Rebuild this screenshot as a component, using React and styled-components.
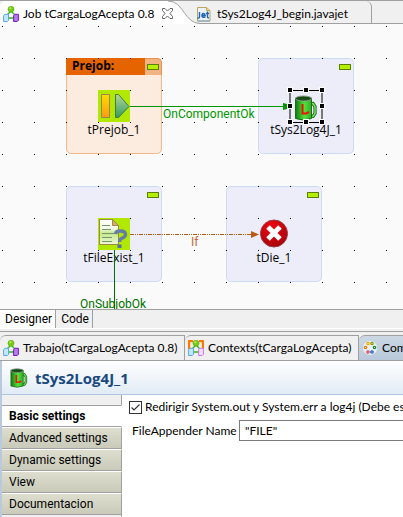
import React from "react";
import styled, { createGlobalStyle } from "styled-components";

const GlobalStyle = createGlobalStyle`
  * { box-sizing: border-box; }
  body {
    margin: 0;
    overflow: hidden;
    background: #f0f0f0;
    color: #000;
    font: 12px/16px Lato, "Open Sans", sans-serif;
  }
  button, input { font: inherit; color: inherit; }
  svg { flex: none; }
`;

const Workbench = styled.div`
  display: flex;
  flex-direction: column;
  height: 100vh;
  overflow: hidden;
  white-space: nowrap;
`;

const EditorTabs = styled.div`
  display: flex;
  flex: none;
  height: 24px;
  border-top: 1px solid #a0a0a0;
  background: #f0f0f0;
  box-shadow: inset 0 -1px #a0a0a0;
`;

const TabButton = styled.button`
  display: flex;
  align-items: center;
  gap: 4px;
  border: 0;
  padding: 0 0 0 3px;
  background: none;
  white-space: nowrap;
`;

const ActiveEditorTab = styled(TabButton)`
  flex: none;
  z-index: 1;
  width: 168px;
  padding-top: 2px;
  background: #fff;
  border-top-left-radius: 6px;
`;

const TabCurve = styled.svg`
  width: 32px;
  height: 23px;
`;

const EditorTab = styled(TabButton)`
  flex: none;
  width: 175px;
  padding: 2px 0 0;
  margin-left: -3px;
  gap: 6px;
  border-right: 1px solid #a0a0a0;
  border-top-right-radius: 6px;
`;

const CloseIcon = styled.svg`
  margin-left: auto;
  margin-right: -5px;
`;

const Canvas = styled.main`
  position: relative;
  flex: none;
  height: 285px;
  overflow: hidden;
  background: #fafafa;
  font-family: "Open Sans", sans-serif;
`;

const Layer = styled.svg`
  position: absolute;
  inset: 0;
  width: 100%;
  height: 100%;
  pointer-events: none;
`;

const Subjob = styled.section`
  position: absolute;
  left: ${(p) => p.$x}px;
  top: ${(p) => p.$y}px;
  width: 96px;
  height: 96px;
  border: 1px solid ${(p) => (p.$warm ? "#f5b888" : "#cfdaf3")};
  border-radius: 5px;
  background: ${(p) => (p.$warm ? "#fcecdf" : "#ededfa")};
`;

const SubjobBar = styled.header`
  display: flex;
  justify-content: flex-end;
  height: 17px;
  margin: -1px -1px 0;
`;

const SubjobTitle = styled.h2`
  flex: 1;
  margin: 0;
  padding-left: 6px;
  background: #e66400;
  font-size: 12px;
  line-height: 16px;
  font-weight: 700;
`;

const Collapse = styled.button`
  display: flex;
  justify-content: center;
  width: 17px;
  border: 1px solid ${(p) => (p.$warm ? "#e89050" : "transparent")};
  border-width: 1px 1px 0 0;
  border-top-right-radius: 5px;
  padding: 5px 0 0;
  background: ${(p) => (p.$warm ? "#f2b382" : "transparent")};

  &::before {
    content: "";
    width: 10px;
    height: 4px;
    border: 1px solid #5c8000;
    background: #b4f000;
  }
`;

const Node = styled.figure`
  position: absolute;
  left: ${(p) => p.$x}px;
  top: ${(p) => p.$y}px;
  display: flex;
  flex-direction: column;
  align-items: center;
  width: 96px;
  margin: 0;
`;

const LinkLabel = styled.span`
  position: absolute;
  left: ${(p) => p.$x}px;
  top: ${(p) => p.$y}px;
  color: ${(p) => p.$color};
  font-family: Roboto, sans-serif;
`;

const PageTabs = styled.div`
  display: flex;
  flex: none;
  height: 20px;
  border-top: 1px solid #a0a0a0;
  border-bottom: 1px solid #fff;
  font-family: Roboto, sans-serif;
`;

const PageTab = styled.button`
  border: 0;
  border-right: 1px solid #a0a0a0;
  padding: 0 3px 0 5px;
  background: ${(p) => (p.$active ? "#fff" : "#f0f0f0")};
`;

const ViewTabs = styled.div`
  display: flex;
  flex: none;
  height: 30px;
  margin-top: 2px;
  border-top: 1px solid #a0a0a0;
  border-bottom: 1px solid #a0a0a0;
  padding-top: 3px;
`;

const ViewTab = styled(TabButton)`
  flex: none;
  width: ${(p) => p.$width}px;
  border-top: 1px solid #a0a0a0;
  border-right: 1px solid #a0a0a0;
  border-top-left-radius: 6px;
  overflow: hidden;
  background: ${(p) => (p.$active ? "linear-gradient(#cbd8e4, #b9c9da)" : "none")};
`;

const Properties = styled.section`
  display: flex;
  flex: 1;
  flex-direction: column;
  min-height: 0;
  border-left: 2px solid #b9cadf;
  background: #fff;
`;

const PropertiesHeader = styled.header`
  display: flex;
  flex: none;
  align-items: center;
  gap: 6px;
  height: 34px;
  padding-left: 7px;
  border-bottom: 1px solid #b0c6df;
  background: linear-gradient(#fff, #e1ebf5);
`;

const ComponentTitle = styled.h1`
  margin: 0;
  color: #19497f;
  font-family: "Open Sans", sans-serif;
  font-size: 15px;
  line-height: 20px;
  font-weight: 700;
`;

const PropertiesBody = styled.div`
  display: flex;
  flex: 1;
  min-height: 0;
`;

const Sidebar = styled.nav`
  display: flex;
  flex: none;
  flex-direction: column;
  width: 120px;
  padding-top: 10px;
  background: #f0f0f0;
  box-shadow: inset -1px 0 #a0a0a0;
`;

const SideTab = styled.button`
  flex: none;
  height: 22px;
  border: 0;
  border-top: 1px solid ${(p) => (p.$active ? "#a0a0a0" : "#fff")};
  border-bottom: 1px solid #a0a0a0;
  border-right: 1px solid ${(p) => (p.$active ? "#fff" : "#a0a0a0")};
  padding: 0 0 0 7px;
  background: ${(p) => (p.$active ? "#fff" : "linear-gradient(#dedecf, #cacaba)")};
  font-family: Roboto, sans-serif;
  font-weight: ${(p) => (p.$active ? 700 : 400)};
  line-height: 18px;
  text-align: left;
`;

const Form = styled.form`
  display: flex;
  flex: 1;
  flex-direction: column;
  gap: 4px;
  min-width: 0;
  padding: 3px 0 0 7px;
  overflow: hidden;
`;

const CheckRow = styled.label`
  display: flex;
  align-items: center;
  gap: 3px;
  height: 18px;
`;

const CheckBox = styled.input`
  appearance: none;
  flex: none;
  width: 13px;
  height: 13px;
  margin: 0;
  border: 1px solid #333;
  background: #fff;

  &:checked {
    background: url("data:image/svg+xml,%3Csvg xmlns='http://www.w3.org/2000/svg' viewBox='0 0 11 11'%3E%3Cpath d='M1.5 5.5L4 8L9.5 2.5' fill='none' stroke='%23333' stroke-width='1.2'/%3E%3C/svg%3E");
  }
`;

const FieldRow = styled.div`
  display: flex;
  align-items: center;
  gap: 2px;
  padding-left: 3px;
`;

const FieldLabel = styled.label`
  flex: none;
  width: 105px;
`;

const TextInput = styled.input`
  flex: 1;
  min-width: 0;
  height: 21px;
  border: 1px solid #7a7a7a;
  border-right: 0;
  padding: 0 5px;
  background: #fff;
  outline: none;
`;

function JobIcon({ framed }) {
  return (
    <svg width="16" height="16" viewBox="0 0 16 16" fill="none">
      {framed && <path d="M1 6V1h4M11 1h4v5M1 6v3M15 5v4" stroke="#ff7800" strokeWidth="2.400" />}
      <path d="M8 5L4 9M8 5l4 4M6 12h5" stroke="#30b818" strokeWidth="1.300" />
      <circle cx="8" cy="3.200" r="3" fill="#78ce12" stroke="#4b9d08" strokeWidth=".5" />
      <circle cx="7.300" cy="2.300" r="1" fill="#b3f45c" />
      <path d="M.6 9.500L2 8.300h3.500v6L4.300 15.500H.6z" fill="#c4e7ff" stroke="#55a8e6" />
      <path d="M10.600 9.500L12 8.300h3.400v6l-1.200 1.200h-3.600z" fill={framed ? "#f1ddff" : "#b879f0"} stroke={framed ? "#c27cec" : "#7217c9"} />
    </svg>
  );
}

function JetIcon() {
  return (
    <svg width="14" height="16" viewBox="0 0 14 16" fill="none">
      <path d="M.5 1.500h9l3.500 3v10.500H.5z" fill="#eaf3fc" stroke="#bda555" />
      <path d="M9.500 1.500v3H13" fill="#f1d68f" stroke="#bda555" />
      <path d="M2.500 6v4.500q0 2-2 1.500M5 9.500h3.300q-.3-2-1.700-2-1.700 0-1.700 2.200T8.300 11M10.500 5.500v5.500q0 1 1.500.8M9 7.500h3" stroke="#2464b4" strokeWidth="1.400" />
      <path d="M.5 15h12.500" stroke="#7ba5cf" />
    </svg>
  );
}

function PaletteIcon() {
  return (
    <svg width="16" height="16" viewBox="0 0 16 16">
      <circle cx="8" cy="8" r="7" fill="#e9eff4" />
      <g fill="#fff" strokeWidth="1.200">
        <circle cx="6" cy="3.500" r="1.200" stroke="#f0a800" />
        <circle cx="10" cy="3.500" r="1.200" stroke="#7c9e00" />
        <circle cx="3.500" cy="7.500" r="1.200" stroke="#f07800" />
        <circle cx="12.500" cy="7.500" r="1.200" stroke="#119025" />
        <circle cx="6" cy="12" r="1.200" stroke="#d73a58" />
        <circle cx="10" cy="12" r="1.200" stroke="#1553bd" />
      </g>
    </svg>
  );
}

function MugIcon({ size = 32 }) {
  return (
    <svg width={size} height={size} viewBox={size === 32 ? "0 0 32 32" : "3 5 26 26"} fill="none">
      <defs>
        <linearGradient id="mugBody">
          <stop offset="0" stopColor="#0f7a12" />
          <stop offset=".55" stopColor="#55e03c" />
          <stop offset="1" stopColor="#2fae26" />
        </linearGradient>
      </defs>
      <path d="M20 14.500l3-1 2 3v7l-2 3h-3" stroke="#1f5a1e" strokeWidth="3.200" />
      <path d="M20 14.500l3-1 2 3v7l-2 3h-3" stroke="#6fe858" strokeWidth="1.500" />
      <path d="M5.500 8v20.500q8 3 16 0V8z" fill="url(#mugBody)" stroke="#1c6a1a" />
      <ellipse cx="13.500" cy="8.500" rx="8" ry="2.500" fill="#164d17" stroke="#8a9c8a" />
      <path d="M12.500 14v9.500h3.500l3-1.500" stroke="#f01208" strokeWidth="2" />
    </svg>
  );
}

function PrejobIcon() {
  return (
    <svg width="32" height="32" viewBox="0 0 32 32">
      <defs>
        <linearGradient id="bar" x2="0" y2="1"><stop stopColor="#ffdb00" /><stop offset="1" stopColor="#ff9a18" /></linearGradient>
        <linearGradient id="play" x2="0" y2="1"><stop stopColor="#b3d59a" /><stop offset="1" stopColor="#389c60" /></linearGradient>
      </defs>
      <path d="M0 0h32v32H0z" fill="#b0e800" />
      <path d="M3.500 4.500h8v23h-8z" fill="url(#bar)" stroke="#9a8551" />
      <path d="M17.500 4.500h3l10.500 12-10.500 11h-3z" fill="url(#play)" stroke="#437b48" />
    </svg>
  );
}

function FileExistIcon() {
  return (
    <svg width="32" height="32" viewBox="0 0 32 32" fill="none">
      <defs>
        <linearGradient id="sheet" x2="0" y2="1"><stop stopColor="#fff" /><stop offset=".35" stopColor="#f7fbe9" /><stop offset=".55" stopColor="#c4e98b" /><stop offset="1" stopColor="#edf7d8" /></linearGradient>
      </defs>
      <path d="M0 0h32v32H0z" fill="#b0e800" />
      <path d="M1.500 1.500h13l6 6v19h-19z" fill="url(#sheet)" stroke="#a38749" />
      <path d="M14.500 1.500v6h6z" fill="#d8ad6e" stroke="#a38749" />
      <path d="M4 7.500h8M4 11.500h9M4 15.500h12M4 19.500h10M4 23.500h10" stroke="#71976b" />
      <path d="M17.500 16q.5-3 4.500-3 5.500 0 5.500 3.500 0 2-3 3.500-3 1-3 4" stroke="#657ca8" strokeWidth="3.400" />
      <path d="M19.500 26.500h4v3.500h-4z" fill="#566ea0" />
    </svg>
  );
}

function DieIcon() {
  return (
    <svg width="32" height="32" viewBox="0 0 32 32">
      <defs>
        <radialGradient id="disc" cx=".4" cy=".25" r=".8"><stop stopColor="#f00812" /><stop offset="1" stopColor="#a50008" /></radialGradient>
      </defs>
      <circle cx="16" cy="15.500" r="13.500" fill="url(#disc)" stroke="#9b3a42" />
      <path d="M10 9l12 12M22 9l-12 12" stroke="#fff" strokeWidth="5" />
    </svg>
  );
}

const SUBJOBS = [
  { x: 66, y: 34, title: "Prejob:" },
  { x: 258, y: 34 },
  { x: 66, y: 162 },
  { x: 226, y: 162 },
];

const NODES = [
  { x: 66, y: 66, label: "tPrejob_1", icon: <PrejobIcon /> },
  { x: 258, y: 66, label: "tSys2Log4J_1", icon: <MugIcon /> },
  { x: 66, y: 194, label: "tFileExist_1", icon: <FileExistIcon /> },
  { x: 226, y: 194, label: "tDie_1", icon: <DieIcon /> },
];

const HANDLES = [
  [290, 66], [306, 66], [322, 66], [290, 82],
  [322, 82], [290, 98], [306, 98], [322, 98],
];

const SIDE_TABS = ["Basic settings", "Advanced settings", "Dynamic settings", "View", "Documentacion"];

function Diagram() {
  return (
    <Canvas>
      {SUBJOBS.map((s) => (
        <Subjob key={`${s.x}-${s.y}`} $x={s.x} $y={s.y} $warm={!!s.title}>
          <SubjobBar>
            {s.title && <SubjobTitle>{s.title}</SubjobTitle>}
            <Collapse $warm={!!s.title} aria-label="Collapse subjob" />
          </SubjobBar>
        </Subjob>
      ))}
      <Layer>
        <defs>
          <pattern id="grid" width="32" height="32" patternUnits="userSpaceOnUse">
            <path d="M2 2h1v1h-1z" />
          </pattern>
        </defs>
        <rect width="100%" height="100%" fill="url(#grid)" />
      </Layer>
      {NODES.map((n) => (
        <Node key={n.label} $x={n.x} $y={n.y}>
          {n.icon}
          <figcaption>{n.label}</figcaption>
        </Node>
      ))}
      <Layer fill="none">
        <path d="M130 82.500h154" stroke="#009600" />
        <path d="M283 79l4 1v5l-4 1z" fill="#009600" />
        <path d="M130 210.500h122" stroke="#b85c14" strokeDasharray="4 1 1 1 1 1" />
        <path d="M251 207l8 3.500-8 3.500z" fill="#b85c14" />
        <path d="M114.500 226v60" stroke="#007000" />
        <path d="M290 66.500h32v32h-32z" stroke="#000" />
        {HANDLES.map(([x, y]) => (
          <rect key={`${x}-${y}`} x={x - 2.5} y={y - 2.5} width="5" height="5" fill="#000" stroke="#fff" />
        ))}
      </Layer>
      <LinkLabel $x={163} $y={82} $color="#009600">OnComponentOk</LinkLabel>
      <LinkLabel $x={191} $y={210} $color="#c06a3c">If</LinkLabel>
      <LinkLabel $x={80} $y={272} $color="#007000">OnSubjobOk</LinkLabel>
    </Canvas>
  );
}

export default function App() {
  return (
    <Workbench>
      <GlobalStyle />
      <EditorTabs>
        <ActiveEditorTab>
          <JobIcon />
          Job tCargaLogAcepta 0.8
          <CloseIcon width="11" height="11" viewBox="0 0 11 11" fill="#fff" stroke="#666">
            <path d="M.5.5h2.500l2.500 2.500L8 .5h2.500v2L8 5.500l2.500 3v2H8L5.500 8 3 10.500H.5v-2l2.500-3-2.500-3z" />
          </CloseIcon>
        </ActiveEditorTab>
        <TabCurve viewBox="0 0 32 23">
          <path d="M0 0C16 0 16 22.500 32 22.500V23H0z" fill="#fff" />
          <path d="M0 0C16 0 16 22.500 32 22.500" fill="none" stroke="#a0a0a0" />
        </TabCurve>
        <EditorTab>
          <JetIcon />
          tSys2Log4J_begin.javajet
        </EditorTab>
      </EditorTabs>
      <Diagram />
      <PageTabs>
        <PageTab $active>Designer</PageTab>
        <PageTab>Code</PageTab>
      </PageTabs>
      <ViewTabs>
        <ViewTab $width={185}><JobIcon />Trabajo(tCargaLogAcepta 0.8)</ViewTab>
        <ViewTab $width={174}><JobIcon framed />Contexts(tCargaLogAcepta)</ViewTab>
        <ViewTab $width={120} $active><PaletteIcon />Component</ViewTab>
      </ViewTabs>
      <Properties>
        <PropertiesHeader>
          <MugIcon size={20} />
          <ComponentTitle>tSys2Log4J_1</ComponentTitle>
        </PropertiesHeader>
        <PropertiesBody>
          <Sidebar>
            {SIDE_TABS.map((name, i) => (
              <SideTab key={name} $active={i === 0}>{name}</SideTab>
            ))}
          </Sidebar>
          <Form>
            <CheckRow>
              <CheckBox type="checkbox" defaultChecked />
              Redirigir System.out y System.err a log4j (Debe es
            </CheckRow>
            <FieldRow>
              <FieldLabel htmlFor="appender">FileAppender Name</FieldLabel>
              <TextInput id="appender" defaultValue={'"FILE"'} />
            </FieldRow>
          </Form>
        </PropertiesBody>
      </Properties>
    </Workbench>
  );
}
